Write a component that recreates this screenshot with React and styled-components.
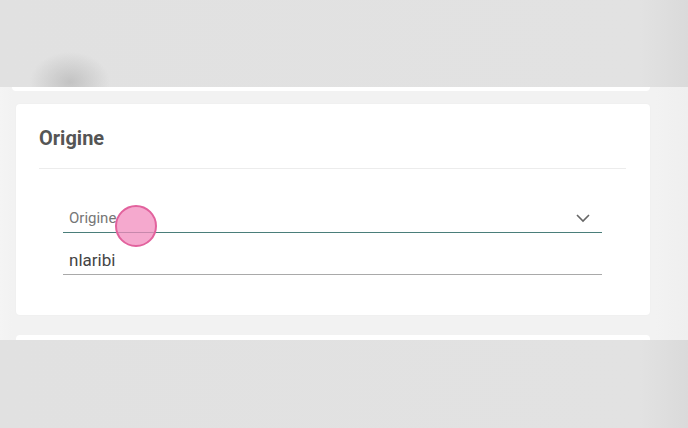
import React from "react";
import styled, { createGlobalStyle } from "styled-components";

const Global = createGlobalStyle`
  html, body {
    margin: 0;
    padding: 0;
    background: #f2f2f2;
    font-family: Roboto, "Liberation Sans", Arial, sans-serif;
  }
`;

const Page = styled.div`
  width: 688px;
  height: 428px;
  overflow: hidden;
  display: flex;
  flex-direction: column;
  background: #f2f2f2;
`;

const Shade = styled.div`
  height: ${p => p.h}px;
  flex: none;
  background:
    ${p => p.spot ? "radial-gradient(ellipse 40px 30px at 70px 82px, rgba(170,170,170,0.55), rgba(200,200,200,0) 100%)," : ""}
    linear-gradient(to right, #e1e1e1 0, #e2e2e2 640px, #dadada 688px);
`;

const Middle = styled.div`
  flex: 1;
  display: flex;
  flex-direction: column;
  padding: 0 38px 0 16px;
  overflow: hidden;
  background: linear-gradient(to right, #f4f4f4 0, #f2f2f2 12px, #f2f2f2 655px, #efefef 688px);
`;

const PrevCardEdge = styled.div`
  height: 4px;
  margin-left: -4px;
  background: #fff;
  border-radius: 0 0 4px 4px;
  flex: none;
`;

const Card = styled.section`
  background: #fff;
  border-radius: 4px;
  box-shadow: 0 0 2px rgba(0, 0, 0, 0.04);
  margin-top: ${p => p.mt}px;
  padding: 23px 24px 40px 23px;
  flex: none;
`;

const Title = styled.h2`
  margin: 0;
  font-size: 20px;
  line-height: 22px;
  font-weight: 700;
  color: #555;
`;

const Divider = styled.hr`
  border: none;
  border-top: 1px solid #ececec;
  margin: 19px 0 0;
`;

const Fields = styled.div`
  padding: 32px 24px 0;
  display: flex;
  flex-direction: column;
  gap: 10px;
  position: relative;
`;

const Field = styled.div`
  height: 32px;
  display: flex;
  align-items: center;
  justify-content: space-between;
  padding: 2px 11px 0 6px;
  border-bottom: 1px solid ${p => p.active ? "#4a7e7a" : "#a9a9a9"};
  color: ${p => p.muted ? "#767676" : "#444"};
  font-size: ${p => p.muted ? 15 : 17}px;
  box-sizing: border-box;
`;

const Cursor = styled.div`
  position: absolute;
  left: 76px;
  top: 36px;
  width: 42px;
  height: 42px;
  border-radius: 50%;
  background: rgba(242, 140, 190, 0.75);
  border: 2px solid #e2629d;
  box-sizing: border-box;
`;

const NextCard = styled.div`
  margin-top: 20px;
  height: 20px;
  background: #fff;
  border-radius: 4px 4px 0 0;
  flex: none;
`;

const Chevron = () => (
  <svg width="16" height="10" viewBox="0 0 16 10" fill="none">
    <path d="M2 2l6 6 6-6" stroke="#666" strokeWidth="1.6" />
  </svg>
);

export default function App() {
  return (
    <Page>
      <Global />
      <Shade h={87} spot />
      <Middle>
        <PrevCardEdge />
        <Card mt={13}>
          <Title>Origine</Title>
          <Divider />
          <Fields>
            <Field active muted>
              <span>Origine</span>
              <Chevron />
            </Field>
            <Field>
              <span>nlaribi</span>
            </Field>
            <Cursor />
          </Fields>
        </Card>
        <NextCard />
      </Middle>
      <Shade h={88} />
    </Page>
  );
}
